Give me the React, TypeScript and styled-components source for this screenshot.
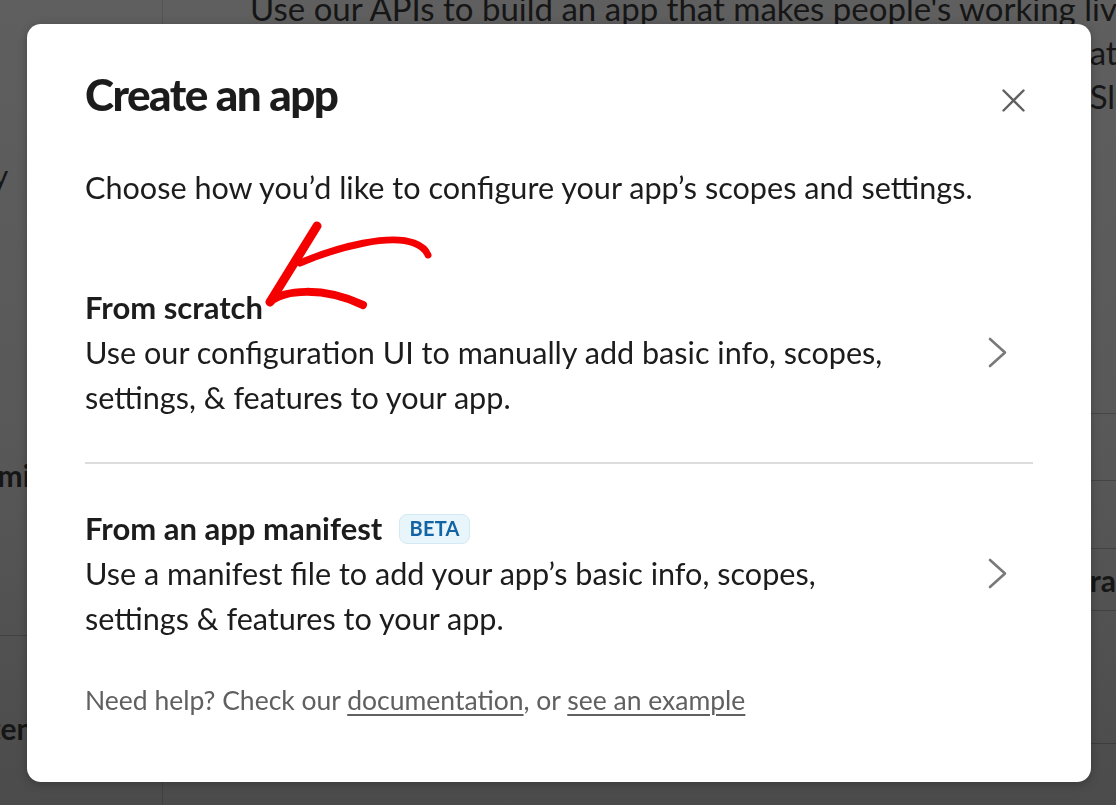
import React from "react";
import styled, { createGlobalStyle } from "styled-components";

const GlobalStyle = createGlobalStyle`
  html, body { margin: 0; padding: 0; }
  body {
    font-family: Lato, "Noto Sans", "Liberation Sans", sans-serif;
    color: #1d1c1d;
    -webkit-font-smoothing: antialiased;
  }
  * { box-sizing: border-box; }
`;

/* ---------- page behind the dialog ---------- */

const Backdrop = styled.div`
  display: grid;
  grid-template-columns: 163px 1fr;
  width: 1116px;
  height: 805px;
  overflow: hidden;
  background: linear-gradient(180deg, #5f5f5f 0%, #585858 55%, #4b4b4b 100%);
  color: #161616;
`;

const Sidebar = styled.aside`
  border-right: 1px solid rgba(0, 0, 0, 0.12);
  display: flex;
  flex-direction: column;
  overflow: hidden;
`;

const SideItem = styled.div<{ $top: number; $indent?: number; $bold?: boolean; $line?: boolean }>`
  margin-top: ${(p) => p.$top}px;
  margin-left: ${(p) => -(p.$indent ?? 0)}px;
  font-size: 30px;
  line-height: 40px;
  font-weight: ${(p) => (p.$bold ? 700 : 400)};
  white-space: nowrap;
  border-bottom: ${(p) => (p.$line ? "1px solid rgba(0,0,0,0.18)" : "none")};
`;

const Main = styled.main`
  padding-left: 87px;
  overflow: hidden;
`;

const Intro = styled.div`
  margin-top: -14px;
  width: 893px;
  font-size: 33px;
  line-height: 44px;
`;

const IntroLine = styled.div<{ $right?: boolean; $end?: number }>`
  white-space: nowrap;
  text-align: ${(p) => (p.$right ? "right" : "left")};
  margin-right: ${(p) => p.$end ?? 0}px;
`;

const Rows = styled.div`
  margin-top: 295px;
  display: flex;
  flex-direction: column;
`;

const Row = styled.div<{ $h: number }>`
  height: ${(p) => p.$h}px;
  border-top: 1px solid rgba(0, 0, 0, 0.2);
  display: flex;
  align-items: center;
  justify-content: flex-end;
  font-size: 30px;
  font-weight: 700;
  white-space: nowrap;
  overflow: hidden;
`;

/* ---------- dialog ---------- */

const Overlay = styled.div`
  position: fixed;
  inset: 0;
  display: flex;
  align-items: flex-start;
  padding: 24px 0 0 27px;
`;

const Modal = styled.div`
  position: relative;
  width: 1064px;
  height: 758px;
  background: #ffffff;
  border-radius: 14px;
  box-shadow: 0 2px 10px rgba(0, 0, 0, 0.25);
  padding: 40px 58px 0 58px;
`;

const Header = styled.div`
  display: flex;
  justify-content: space-between;
  align-items: center;
`;

const Title = styled.h1`
  margin: 0;
  font-size: 44px;
  line-height: 60px;
  font-weight: 900;
  letter-spacing: -1.5px;
  color: #1d1c1d;
`;

const CloseButton = styled.button`
  margin: 13px 8px 0 0;
  width: 23px;
  height: 23px;
  padding: 0;
  border: 0;
  background: transparent;
  display: flex;
  cursor: pointer;
`;

const Lead = styled.p`
  margin: 41px 0 0;
  font-size: 30.6px;
  line-height: 45px;
`;

const Options = styled.div`
  margin-top: 75px;
  display: flex;
  flex-direction: column;
`;

const Option = styled.div`
  display: flex;
  align-items: center;
  gap: 24px;
  cursor: pointer;
`;

const OptionText = styled.div`
  flex: 1;
  min-width: 0;
`;

const OptionTitle = styled.div`
  display: flex;
  align-items: center;
  gap: 17px;
  font-size: 31px;
  line-height: 45px;
  font-weight: 700;
`;

const OptionDesc = styled.div`
  font-size: 30.6px;
  line-height: 45px;
  max-width: 820px;
`;

const Badge = styled.span`
  display: inline-flex;
  align-items: center;
  height: 30px;
  padding: 0 9px;
  border-radius: 8px;
  background: #e8f5fa;
  border: 1px solid #d3e9f3;
  color: #1264a3;
  font-size: 20px;
  font-weight: 700;
  letter-spacing: 0.3px;
`;

const Chevron = styled.svg`
  flex: none;
  margin-right: 25px;
`;

const Divider = styled.hr`
  margin: 42px 0;
  border: 0;
  border-top: 2px solid #dddddd;
`;

const Footer = styled.p`
  margin: 41px 0 0;
  font-size: 26.5px;
  line-height: 36px;
  color: #616061;
`;

const FooterLink = styled.a`
  color: #616061;
  text-decoration: underline;
  text-underline-offset: 4px;
  text-decoration-thickness: 2px;
`;

const Annotation = styled.svg`
  position: absolute;
  left: 235px;
  top: 194px;
  pointer-events: none;
`;

const ChevronIcon = () => (
  <Chevron width="20" height="31" viewBox="0 0 20 31" fill="none">
    <path d="M2 2 L17 15.5 L2 29" stroke="#7a797a" strokeWidth="2.6" strokeLinecap="round" strokeLinejoin="round" />
  </Chevron>
);

export default function App() {
  return (
    <>
      <GlobalStyle />
      <Backdrop>
        <Sidebar>
          <SideItem $top={155} $indent={116}>Directory</SideItem>
          <SideItem $top={260} $indent={40} $bold>Admin</SideItem>
          <SideItem $top={140} $line />
          <SideItem $top={72} $indent={64} $bold>Content</SideItem>
        </Sidebar>
        <Main>
          <Intro>
            <IntroLine>Use our APIs to build an app that makes people's working lives better.</IntroLine>
            <IntroLine $right $end={8}>or create</IntroLine>
            <IntroLine $right $end={-21}>build a Slack</IntroLine>
          </Intro>
          <Rows>
            <Row $h={67} />
            <Row $h={68} />
            <Row $h={62}>ra</Row>
            <Row $h={133} />
            <Row $h={70} />
          </Rows>
        </Main>
      </Backdrop>

      <Overlay>
        <Modal role="dialog" aria-label="Create an app">
          <Header>
            <Title>Create an app</Title>
            <CloseButton aria-label="Close">
              <svg width="23" height="23" viewBox="0 0 23 23" fill="none">
                <path d="M1.5 1.5 L21.5 21.5 M21.5 1.5 L1.5 21.5" stroke="#616061" strokeWidth="2.4" strokeLinecap="round" />
              </svg>
            </CloseButton>
          </Header>

          <Lead>Choose how you’d like to configure your app’s scopes and settings.</Lead>

          <Options>
            <Option>
              <OptionText>
                <OptionTitle>From scratch</OptionTitle>
                <OptionDesc>
                  Use our configuration UI to manually add basic info, scopes, settings, &amp; features to your app.
                </OptionDesc>
              </OptionText>
              <ChevronIcon />
            </Option>

            <Divider />

            <Option>
              <OptionText>
                <OptionTitle>
                  From an app manifest <Badge>BETA</Badge>
                </OptionTitle>
                <OptionDesc>
                  Use a manifest file to add your app’s basic info, scopes, settings &amp; features to your app.
                </OptionDesc>
              </OptionText>
              <ChevronIcon />
            </Option>
          </Options>

          <Footer>
            Need help? Check our <FooterLink href="#">documentation</FooterLink>, or{" "}
            <FooterLink href="#">see an example</FooterLink>
          </Footer>

          <Annotation width="180" height="100" viewBox="0 0 180 100" fill="none">
            <path d="M55 8 C44 26, 28 52, 8 84" stroke="#f50000" strokeWidth="9" strokeLinecap="round" />
            <path d="M38 45 C78 28, 128 16, 152 25 C160 28, 164 32, 166 37" stroke="#f50000" strokeWidth="7" strokeLinecap="round" />
            <path d="M8 84 C22 72, 60 68, 101 87" stroke="#f50000" strokeWidth="8" strokeLinecap="round" />
          </Annotation>
        </Modal>
      </Overlay>
    </>
  );
}
